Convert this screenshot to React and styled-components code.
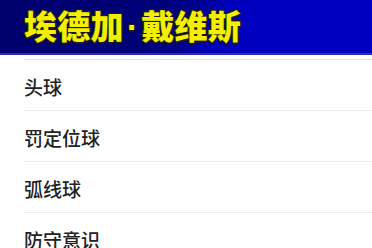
import React from "react";
import styled, { createGlobalStyle } from "styled-components";

const Global = createGlobalStyle`
  html, body { margin: 0; padding: 0; background: #ffffff; }
  body { font-family: "Noto Sans CJK SC", "Noto Sans", sans-serif; }
`;

const Page = styled.div`
  width: 372px;
  height: 248px;
  overflow: hidden;
  background: #ffffff;
`;

const Banner = styled.header`
  height: 53px;
  display: flex;
  align-items: center;
  padding-left: 24px;
  background: linear-gradient(112deg, #00006c 0%, #000078 38%, #00008a 50%, #0000b8 58%, #0000c2 70%, #0000c0 100%);
  border-bottom: 2px solid #2a2ab8;
`;

const Title = styled.h1`
  margin: 0;
  font-family: "Noto Sans CJK SC", sans-serif;
  font-weight: 900;
  font-size: 33px;
  line-height: 1;
  letter-spacing: 0.3px;
  color: #f2f000;
  text-shadow:
    1px 1px 0 #1a1a20, -1px -1px 0 #1a1a20, 1px -1px 0 #1a1a20, -1px 1px 0 #1a1a20,
    0 1.5px 0 #1a1a20, 1.5px 0 0 #1a1a20, 0 -1.5px 0 #1a1a20, -1.5px 0 0 #1a1a20;
`;

const Dot = styled.span`
  font-family: "Liberation Sans", sans-serif;
  font-weight: 700;
  display: inline-block;
  margin: 0 3px 0 3px;
`;

const List = styled.ul`
  list-style: none;
  margin: 4px 0 0 24px;
  padding: 0;
  border-top: 1px solid #e8e4d6;
`;

const Item = styled.li`
  height: 51px;
  display: flex;
  align-items: center;
  padding-top: 3px;
  box-sizing: border-box;
  border-bottom: 1px solid #ececec;
  font-size: 19px;
  font-weight: 500;
  color: #222222;
`;

const items = ["头球", "罚定位球", "弧线球", "防守意识"];

export default function App() {
  return (
    <Page>
      <Global />
      <Banner>
        <Title>
          埃德加<Dot>·</Dot>戴维斯
        </Title>
      </Banner>
      <List>
        {items.map((t) => (
          <Item key={t}>{t}</Item>
        ))}
      </List>
    </Page>
  );
}
